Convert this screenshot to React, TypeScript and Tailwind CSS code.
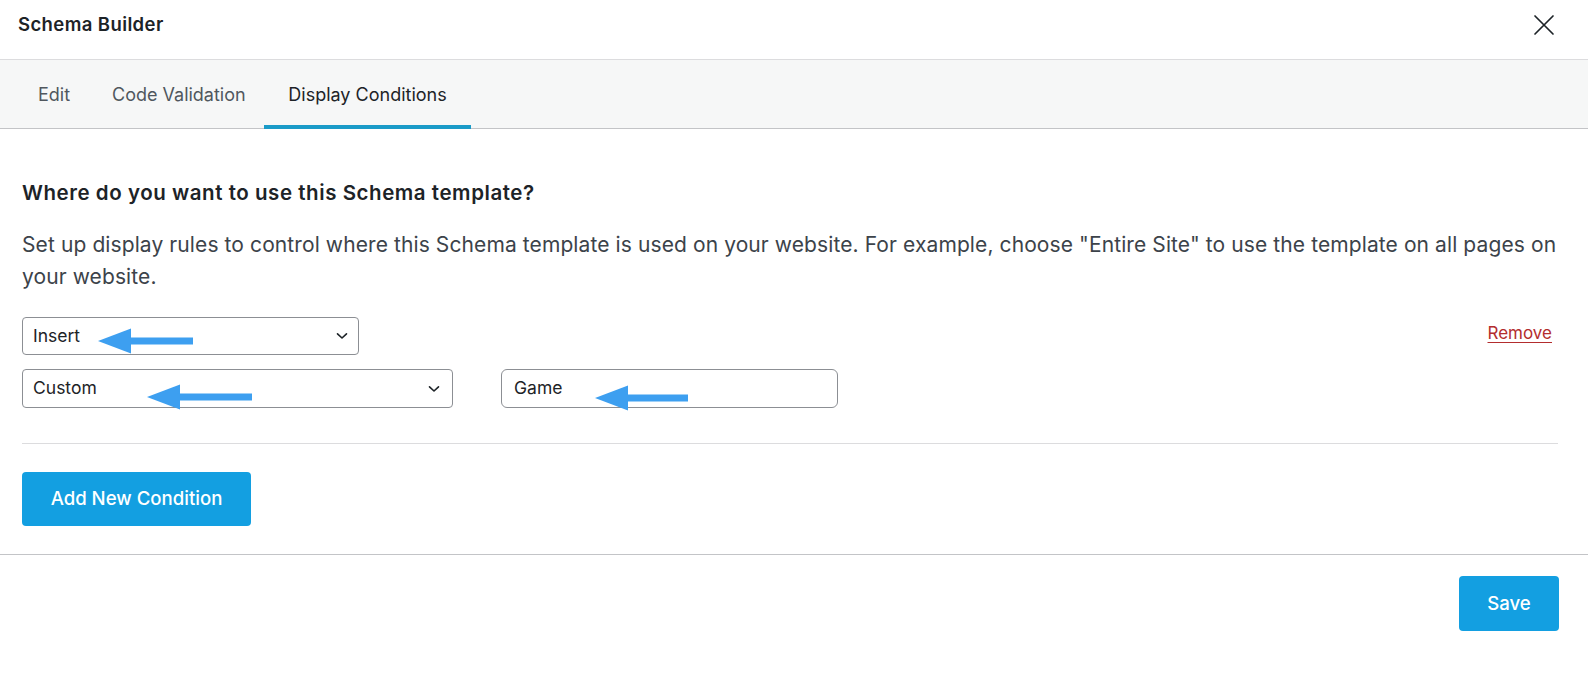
import React from "react";

function Chevron() {
  return (
    <svg width="12" height="8" viewBox="0 0 12 8" fill="none">
      <path d="M1.5 1.8 L6 6 L10.5 1.8" stroke="#1d2327" strokeWidth="1.6" strokeLinecap="round" strokeLinejoin="round" />
    </svg>
  );
}

function Arrow({ left, top, length }: { left: number; top: number; length: number }) {
  return (
    <svg
      className="absolute pointer-events-none"
      style={{ left, top }}
      width={length}
      height={26}
      viewBox={`0 0 ${length} 26`}
    >
      <polygon points={`0,13 33,0.5 33,25.5`} fill="#3d9ff0" />
      <rect x={30} y={9.5} width={length - 30} height={7} fill="#3d9ff0" />
    </svg>
  );
}

export default function App() {
  return (
    <div
      className="relative w-[1588px] h-[696px] bg-white overflow-hidden text-[#1d2327]"
      style={{ fontFamily: "Inter, 'Noto Sans', sans-serif" }}
    >
      {/* Header */}
      <div className="h-[60px] flex items-start justify-between pl-[18px] pr-[33px] pt-[12px] border-b border-[#dcdcde]">
        <div className="text-[18.5px] leading-[24px] font-semibold tracking-[0.4px]">Schema Builder</div>
        <svg width="22" height="22" viewBox="0 0 22 22" className="mt-[2px]">
          <path d="M2 2 L20 20 M20 2 L2 20" stroke="#1d2327" strokeWidth="1.7" strokeLinecap="round" />
        </svg>
      </div>

      {/* Tabs */}
      <div className="h-[69px] bg-[#f6f7f7] border-b border-[#c3c4c7] flex items-stretch text-[18px]">
        <div className="ml-[38px] w-[74px] flex items-center text-[#50575e]">Edit</div>
        <div className="w-[152px] flex items-center text-[#50575e]">Code Validation</div>
        <div className="w-[207px] flex items-center justify-center relative text-[#1d2327]">
          <span>Display Conditions</span>
          <div className="absolute left-0 right-0 bottom-[-1px] h-[4px] bg-[#1a9bc8]" />
        </div>
      </div>

      {/* Body */}
      <div className="pl-[22px] pr-[30px] pt-[50px]">
        <h2 className="text-[20.5px] leading-[28px] font-semibold tracking-[0.55px]">Where do you want to use this Schema template?</h2>
        <p className="mt-[22px] mr-[-40px] text-[21px] leading-[32px] tracking-[0.1px] text-[#3c434a] whitespace-nowrap">
          Set up display rules to control where this Schema template is used on your website. For example, choose "Entire Site" to use the template on all pages on
          <br />
          your website.
        </p>

        <div className="mt-[24px] flex items-start justify-between">
          <div className="w-[337px] h-[38px] border border-[#8c8f94] rounded-[4px] flex items-center justify-between pl-[10px] pr-[10px] text-[17.5px]">
            <span>Insert</span>
            <Chevron />
          </div>
          <a className="mt-[4px] mr-[6px] text-[17px] text-[#b32d2e] underline underline-offset-[3px]">Remove</a>
        </div>

        <div className="mt-[14px] flex items-center gap-[48px]">
          <div className="w-[431px] h-[39px] border border-[#8c8f94] rounded-[4px] flex items-center justify-between pl-[10px] pr-[12px] text-[17.5px]">
            <span>Custom</span>
            <Chevron />
          </div>
          <div className="w-[337px] h-[39px] border border-[#8c8f94] rounded-[6px] flex items-center pl-[12px] text-[17.5px]">
            <span>Game</span>
          </div>
        </div>

        <div className="mt-[35px] border-t border-[#dcdcde]" />

        <button className="mt-[28px] w-[229px] h-[54px] rounded-[4px] bg-[#139fe1] text-white text-[18.6px] font-medium">
          Add New Condition
        </button>
      </div>

      <div className="mt-[28px] border-t border-[#c3c4c7]" />

      <div className="flex justify-end pr-[29px] pt-[21px]">
        <button className="w-[100px] h-[55px] rounded-[4px] bg-[#139fe1] text-white text-[18.6px] font-medium">Save</button>
      </div>

      <Arrow left={98} top={328} length={95} />
      <Arrow left={147} top={384} length={105} />
      <Arrow left={595} top={385} length={93} />
    </div>
  );
}
